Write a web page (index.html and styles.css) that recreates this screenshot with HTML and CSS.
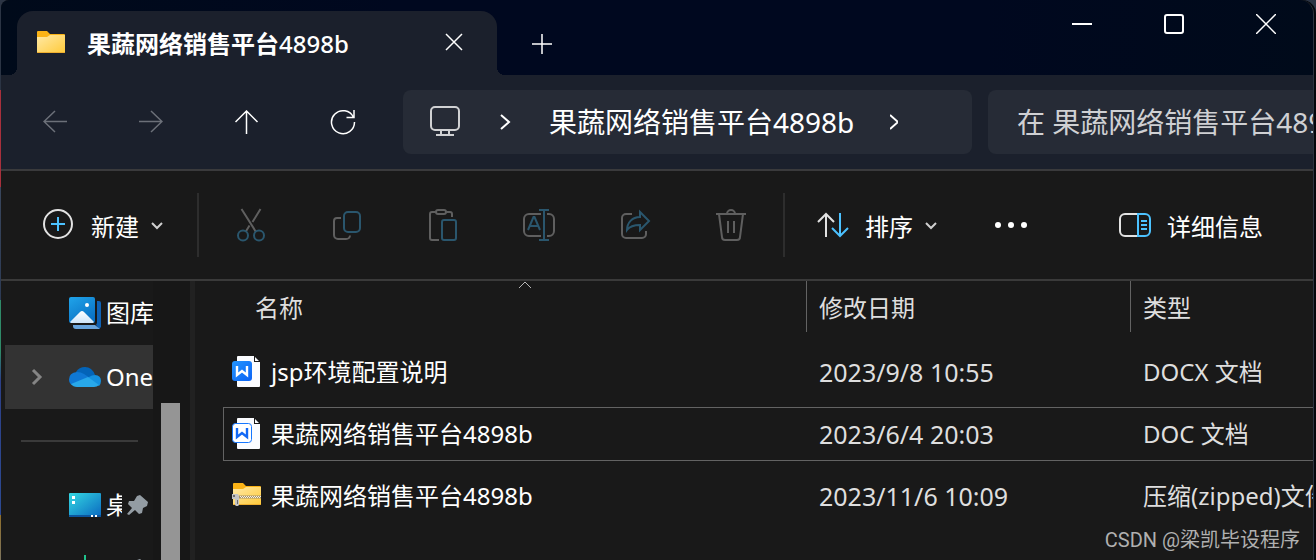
FILE: index.html
```html
<!DOCTYPE html>
<html lang="zh-CN">
<head>
    <meta charset="UTF-8">
    <meta name="viewport" content="width=device-width, initial-scale=1.0">
    <title>果蔬网络销售平台4898b</title>
    <link rel="stylesheet" href="styles.css">
</head>
<body>
    <div class="window">
        <header class="titlebar">
            <div class="tab">
                <svg class="folder" width="28" height="24" viewBox="0 0 28 24">
                    <defs>
                        <linearGradient id="folderFill" x1="0" y1="0" x2="1" y2="1">
                            <stop offset="0" stop-color="#ffe9a6"/>
                            <stop offset="1" stop-color="#ffca3a"/>
                        </linearGradient>
                    </defs>
                    <path d="M0 1a1 1 0 0 1 1-1h9l3 3h14a1 1 0 0 1 1 1v3H0z" fill="#fbb316"/>
                    <path d="M0 6h10l3-2h15v17a1 1 0 0 1-1 1H1a1 1 0 0 1-1-1z" fill="url(#folderFill)"/>
                    <path d="M0 21h28a1 1 0 0 1-1 1H1a1 1 0 0 1-1-1z" fill="#f0b030"/>
                </svg>
                <span class="tab-title">果蔬网络销售平台<span class="latin">4898b</span></span>
                <button class="tab-close" aria-label="关闭标签页">
                    <svg width="20" height="20" viewBox="0 0 20 20"><path d="M2 1l16 16M18 1L2 17"/></svg>
                </button>
            </div>
            <button class="new-tab" aria-label="新建标签页">
                <svg width="20" height="20" viewBox="0 0 20 20"><path d="M10 0v20M0 10h20"/></svg>
            </button>
            <div class="window-buttons">
                <button aria-label="最小化">
                    <svg width="20" height="20" viewBox="0 0 20 20"><path d="M0 10h20" stroke-width="2"/></svg>
                </button>
                <button aria-label="最大化">
                    <svg width="20" height="20" viewBox="0 0 20 20"><rect x="1" y="1" width="18" height="18" rx="2" stroke-width="2"/></svg>
                </button>
                <button aria-label="关闭">
                    <svg width="20" height="20" viewBox="0 0 20 20"><path d="M0 0l20 20M20 0L0 20"/></svg>
                </button>
            </div>
        </header>

        <nav class="navbar">
            <button class="nav-button" aria-label="后退" disabled>
                <svg width="24" height="24" viewBox="0 0 24 24"><path d="M24 11.500H1M12 1L1 11.500 12 22"/></svg>
            </button>
            <button class="nav-button" aria-label="前进" disabled>
                <svg width="24" height="24" viewBox="0 0 24 24"><path d="M0 11.500h23M12 1l11 10.500L12 22"/></svg>
            </button>
            <button class="nav-button" aria-label="向上">
                <svg width="24" height="24" viewBox="0 0 24 24"><path d="M11.500 24V1M.5 12l11-11 11 11"/></svg>
            </button>
            <button class="nav-button" aria-label="刷新">
                <svg width="26" height="26" viewBox="0 0 26 26"><path d="M23.500 8.500A11.500 11.500 0 1 0 24.500 13M24 1v7.500h-7.500"/></svg>
            </button>
            <div class="address">
                <svg width="32" height="32" viewBox="0 0 32 32" class="monitor">
                    <rect x="2" y="1" width="28" height="23" rx="4"/>
                    <path d="M12 24v5M20 24v5M7 29h18"/>
                </svg>
                <svg width="16" height="18" viewBox="0 0 16 18" class="chevron"><path d="M4 2l8 7-8 7"/></svg>
                <a href="#" class="crumb">果蔬网络销售平台4898b</a>
                <svg width="8" height="18" viewBox="4 0 8 18" class="chevron"><path d="M4 2l8 7-8 7"/></svg>
            </div>
            <input class="search" type="text" aria-label="搜索" placeholder="在 果蔬网络销售平台4898b 中搜索">
        </nav>

        <div class="toolbar">
            <button class="command">
                <svg width="32" height="32" viewBox="0 0 32 32">
                    <circle cx="15" cy="15" r="14"/>
                    <path d="M15 8v14M8 15h14" class="accent"/>
                </svg>
                <span>新建</span>
                <svg width="16" height="16" viewBox="0 0 16 16" class="caret"><path d="M3 6l5 5 5-5"/></svg>
            </button>
            <span class="divider"></span>
            <div class="actions">
                <button aria-label="剪切" disabled>
                    <svg width="32" height="34" viewBox="0 0 32 34">
                        <path d="M6.500 1l14.500 23M25.500 1l-8 13M14.500 17.500L10.500 24"/>
                        <circle cx="8" cy="27.500" r="5" class="accent"/>
                        <circle cx="24" cy="27.500" r="5" class="accent"/>
                    </svg>
                </button>
                <button aria-label="复制" disabled>
                    <svg width="32" height="34" viewBox="0 0 32 34">
                        <path d="M10 10H6a3 3 0 0 0-3 3v14a4 4 0 0 0 4 4h8a4 4 0 0 0 4-3.500"/>
                        <rect x="13" y="4" width="16" height="20" rx="4" class="accent"/>
                    </svg>
                </button>
                <button aria-label="粘贴" disabled>
                    <svg width="32" height="34" viewBox="0 0 32 34">
                        <path d="M9 4H5a2 2 0 0 0-2 2v24a2 2 0 0 0 2 2h7M19 4h4a2 2 0 0 1 2 2v3"/>
                        <rect x="9" y="2" width="10" height="4" rx="2"/>
                        <rect x="15" y="12" width="14" height="20" rx="2" class="accent"/>
                    </svg>
                </button>
                <button aria-label="重命名" disabled>
                    <svg width="32" height="34" viewBox="0 0 32 34">
                        <path d="M18 6H6a5 5 0 0 0-5 5v12a5 5 0 0 0 5 5h12M24 6h2a5 5 0 0 1 5 5v12a5 5 0 0 1-5 5h-2"/>
                        <path d="M5 22L10.500 9h1L17 22M7 18h8M16 2h10M16 32h10M21 2v30" class="accent"/>
                    </svg>
                </button>
                <button aria-label="共享" disabled>
                    <svg width="32" height="34" viewBox="0 0 32 34">
                        <path d="M13 6H7a4 4 0 0 0-4 4v16a4 4 0 0 0 4 4h16a4 4 0 0 0 4-4v-3"/>
                        <path d="M21 4v5c-8 0-13 6-13 13 3-4 7-5 13-5v5l9-9z" class="accent"/>
                    </svg>
                </button>
                <button aria-label="删除" disabled>
                    <svg width="32" height="34" viewBox="0 0 32 34">
                        <path d="M1 6h30M4 6l3 23a3 3 0 0 0 3 3h12a3 3 0 0 0 3-3L28 6M12 6a4 4 0 0 1 8 0M13 13v12M19 13v12"/>
                    </svg>
                </button>
            </div>
            <span class="divider"></span>
            <button class="command sort">
                <svg width="32" height="32" viewBox="0 0 32 32">
                    <path d="M9 28V5M1 13l8-8 8 8"/>
                    <path d="M23 4v23M15 19l8 8 8-8" class="accent"/>
                </svg>
                <span>排序</span>
                <svg width="16" height="16" viewBox="0 0 16 16" class="caret"><path d="M3 6l5 5 5-5"/></svg>
            </button>
            <button class="more" aria-label="查看更多">
                <svg width="32" height="8" viewBox="0 0 32 8">
                    <circle cx="3" cy="4" r="3"/><circle cx="16" cy="4" r="3"/><circle cx="29" cy="4" r="3"/>
                </svg>
            </button>
            <button class="command details">
                <svg width="32" height="32" viewBox="0 0 32 32">
                    <path d="M18 5H6a5 5 0 0 0-5 5v12a5 5 0 0 0 5 5h12"/>
                    <path d="M19 5h7a5 5 0 0 1 5 5v12a5 5 0 0 1-5 5h-7zM22 12h6M22 16h6M22 20h6" class="accent"/>
                </svg>
                <span>详细信息</span>
            </button>
        </div>

        <main class="content">
            <aside class="sidebar">
                <div class="tree">
                    <a href="#" class="tree-item">
                        <svg width="32" height="32" viewBox="0 0 32 32">
                            <defs>
                                <linearGradient id="galleryFill" x1="0" y1="0" x2="0.6" y2="1">
                                    <stop offset="0" stop-color="#20a4ea"/>
                                    <stop offset="1" stop-color="#0a72c4"/>
                                </linearGradient>
                                <linearGradient id="hillFill" x1="0" y1="0" x2="0" y2="1">
                                    <stop offset="0" stop-color="#ffffff"/>
                                    <stop offset="1" stop-color="#cfe6fa"/>
                                </linearGradient>
                            </defs>
                            <path d="M28 4h2a2 2 0 0 1 2 2v24l-2 2-3-4 1-2z" fill="#0f62b4"/>
                            <path d="M4 28h22l5 4H7a3 3 0 0 1-3-3z" fill="#69a5de"/>
                            <rect width="26" height="26" rx="2" fill="url(#galleryFill)"/>
                            <path d="M1 25l10-10q2-2 4 0l10 10-1 1H2z" fill="url(#hillFill)"/>
                            <circle cx="18" cy="8" r="2" fill="#fff"/>
                        </svg>
                        <span>图库</span>
                    </a>
                    <a href="#" class="tree-item active">
                        <svg width="12" height="20" viewBox="0 0 12 20" class="expander"><path d="M2 3l7 7-7 7"/></svg>
                        <svg width="32" height="22" viewBox="0 0 32 22">
                            <path d="M7 6Q10 1 16 1q7 0 10 8l-6 5L8 9z" fill="#0364b8"/>
                            <path d="M8 6q4 0 7 2l6 4L3 19Q0 17 0 13.500 0 6.500 8 6z" fill="#0f78d4"/>
                            <path d="M20 11q3-2 6-2 6 .5 6 6 0 3-2 5L19 12z" fill="#1490df"/>
                            <path d="M2 18l17-7 11 8q-2 2-5 2H8q-4 0-6-3z" fill="#28a8ea"/>
                        </svg>
                        <span>OneDrive</span>
                    </a>
                    <hr class="tree-divider">
                    <a href="#" class="tree-item pinned">
                        <svg width="32" height="24" viewBox="0 0 32 24">
                            <defs>
                                <linearGradient id="desktopFill" x1="0" y1="0" x2="1" y2="1">
                                    <stop offset="0" stop-color="#34d8e2"/>
                                    <stop offset="1" stop-color="#0a68c0"/>
                                </linearGradient>
                            </defs>
                            <rect width="32" height="24" rx="1" fill="url(#desktopFill)"/>
                            <path d="M0 22h32v1a1 1 0 0 1-1 1H1a1 1 0 0 1-1-1z" fill="#0c559e"/>
                            <path d="M3 3h3v3H3zM3 8h3v3H3zM22 22h2v2h-2zM26 22h2v2h-2z" fill="#fff"/>
                        </svg>
                        <span>桌面</span>
                        <svg width="22" height="22" viewBox="0 0 22 22" class="pin"><path d="M13 1l8 7-1 4-4 2-1 5-3 1-4-4-6 5-2-1 5-6-4-4 1-3 5 0 3-5z"/></svg>
                    </a>
                    <a href="#" class="tree-item pinned" aria-label="下载">
                        <svg width="32" height="28" viewBox="0 0 32 28"><path d="M16 0v20M8 12l8 8 8-8M5 26h22" fill="none" stroke="#1fc18b" stroke-width="2"/></svg>
                        <span></span>
                        <svg width="22" height="22" viewBox="0 0 22 22" class="pin"><path d="M13 1l8 7-1 4-4 2-1 5-3 1-4-4-6 5-2-1 5-6-4-4 1-3 5 0 3-5z"/></svg>
                    </a>
                </div>
                <div class="scrollbar"><div class="thumb"></div></div>
            </aside>

            <section class="files">
                <table>
                    <colgroup>
                        <col class="col-name">
                        <col class="col-date">
                        <col class="col-type">
                    </colgroup>
                    <thead>
                        <tr>
                            <th><div class="head head-name">名称
                                <svg width="14" height="8" viewBox="0 0 14 8" class="sort-mark"><path d="M1 7l6-6 6 6"/></svg>
                            </div></th>
                            <th><div class="head">修改日期</div></th>
                            <th><div class="head">类型</div></th>
                        </tr>
                    </thead>
                    <tbody>
                        <tr>
                            <td><div class="cell file-name">
                                <svg width="30" height="32" viewBox="0 0 30 32">
                                    <defs>
                                        <linearGradient id="docxFill" x1="0" y1="0" x2="1" y2="1">
                                            <stop offset="0" stop-color="#2496ff"/>
                                            <stop offset="1" stop-color="#0b62f5"/>
                                        </linearGradient>
                                    </defs>
                                    <path d="M6 0h16v6h6v24a1 1 0 0 1-1 1H6a1 1 0 0 1-1-1V1a1 1 0 0 1 1-1z" fill="#fbfcff"/>
                                    <path d="M23 1l4 4h-4z" fill="#fbfcff"/>
                                    <rect x="0" y="5" width="20" height="20" rx="3" fill="url(#docxFill)"/>
                                    <path d="M5 10v9l5-4 5 4v-9" fill="none" stroke="#fff" stroke-width="2.400"/>
                                </svg>
                                <span>jsp环境配置说明</span>
                            </div></td>
                            <td><div class="cell date">2023/9/8 10:55</div></td>
                            <td><div class="cell">DOCX 文档</div></td>
                        </tr>
                        <tr class="focused">
                            <td><div class="cell file-name">
                                <svg width="30" height="32" viewBox="0 0 30 32">
                                    <path d="M6 0h16v6h6v24a1 1 0 0 1-1 1H6a1 1 0 0 1-1-1V1a1 1 0 0 1 1-1z" fill="#fbfcff"/>
                                    <path d="M23 1l4 4h-4z" fill="#fbfcff"/>
                                    <rect x=".5" y="5.500" width="19" height="19" rx="3" fill="#fff" stroke="#1677ff"/>
                                    <path d="M5 10v9l5-4 5 4v-9" fill="none" stroke="#1268f5" stroke-width="2.400"/>
                                </svg>
                                <span>果蔬网络销售平台4898b</span>
                            </div></td>
                            <td><div class="cell date">2023/6/4 20:03</div></td>
                            <td><div class="cell">DOC 文档</div></td>
                        </tr>
                        <tr>
                            <td><div class="cell file-name">
                                <svg width="30" height="26" viewBox="0 0 30 26">
                                    <path d="M1 1a1 1 0 0 1 1-1h9l3 3h14a1 1 0 0 1 1 1v3H1z" fill="#fbb316"/>
                                    <path d="M1 6h10l3-2h15v17a1 1 0 0 1-1 1H2a1 1 0 0 1-1-1z" fill="url(#folderFill)"/>
                                    <path d="M1 21h28a1 1 0 0 1-1 1H2a1 1 0 0 1-1-1z" fill="#f0b030"/>
                                    <path d="M7 14h22" stroke="#a89468" stroke-width="3"/>
                                    <path d="M8 13.500h21M9 14.500h20" stroke="#f4f0e4" stroke-dasharray="1 1"/>
                                    <path d="M0 11h6l1 2v9l-1 1H4l-1-1v-6H0z" fill="#c4c4c4"/>
                                    <path d="M1 12h2v2H1zM5 17h1v4H5z" fill="#6c6c6c"/>
                                </svg>
                                <span>果蔬网络销售平台4898b</span>
                            </div></td>
                            <td><div class="cell date">2023/11/6 10:09</div></td>
                            <td><div class="cell">压缩(zipped)文件夹</div></td>
                        </tr>
                    </tbody>
                </table>
            </section>
        </main>
    </div>
    <div class="watermark">CSDN @梁凯毕设程序</div>
</body>
</html>
```
FILE: styles.css
```css
* {
    box-sizing: border-box;
}
body {
    margin: 0;
    height: 100vh;
    overflow: hidden;
    padding: 0 2px 0 1px;
    /* desktop showing along the left edge of the window */
    background: linear-gradient(#2b3444 90px, #a8303c 90px, #a8303c 187px, #39465c 187px, #2c3a54 300px, #2f8a68 300px, #2f8a68 352px, #2c3f86 380px, #2c4a92 515px, #8f6f2c 515px, #7d745c 100%);
    color: #fff;
    font-family: "Noto Sans", "Noto Sans CJK SC", sans-serif;
    font-size: 24px;
    line-height: 32px;
}
button {
    display: flex;
    align-items: center;
    justify-content: center;
    padding: 0;
    border: none;
    background: none;
    color: inherit;
    font: inherit;
}
a {
    color: inherit;
    text-decoration: none;
}
svg {
    display: block;
    flex: none;
}
.window {
    display: flex;
    flex-direction: column;
    height: 100%;
    overflow: hidden;
    border-right: 1px solid #2c333f;
    border-radius: 8px 14px 0 0;
    background: #191919;
    box-shadow: 2px 0 #04070c;
}

/* title bar */
.titlebar {
    display: flex;
    align-items: flex-end;
    flex: none;
    height: 75px;
    padding-left: 16px;
    background: linear-gradient(90deg, #000a1a, #00081f 30%, #00081f 75%, #000a1a);
}
.titlebar svg {
    fill: none;
    stroke: #fff;
    stroke-width: 1.5;
}
.titlebar .folder {
    stroke: none;
}
.tab {
    position: relative;
    display: flex;
    align-items: center;
    width: 480px;
    height: 64px;
    padding: 0 11px 0 20px;
    border-radius: 16px 16px 0 0;
    background: #1b202c;
}
.tab::before,
.tab::after {
    content: "";
    position: absolute;
    bottom: 0;
    width: 8px;
    height: 8px;
}
.tab::before {
    right: 100%;
    background: radial-gradient(circle at 0 0, transparent 8px, #1b202c 8px);
}
.tab::after {
    left: 100%;
    background: radial-gradient(circle at 100% 0, transparent 8px, #1b202c 8px);
}
.tab-title {
    flex: 1;
    margin-left: 22px;
    padding-top: 2px;
    font-weight: bold;
}
.tab-title .latin {
    font-weight: 500;
}
.tab-close {
    width: 64px;
    height: 48px;
}
.new-tab {
    width: 64px;
    height: 62px;
    margin-left: 13px;
}
.window-buttons {
    display: flex;
    align-self: flex-start;
    margin-left: auto;
    padding-right: 1px;
}
.window-buttons button {
    width: 92px;
    height: 48px;
}

/* navigation */
.navbar {
    display: flex;
    align-items: center;
    flex: none;
    height: 96px;
    padding-left: 22px;
    border-bottom: 2px solid #3a3a3c;
    background: #1b202c;
}
.nav-button {
    width: 64px;
    height: 64px;
    margin-right: 32px;
}
.nav-button svg {
    fill: none;
    stroke: #fff;
    stroke-width: 1.5;
}
.nav-button:disabled svg {
    stroke: #6c7079;
}
.address {
    display: flex;
    align-items: center;
    flex: 1;
    gap: 36px;
    height: 64px;
    margin-left: -4px;
    padding-left: 26px;
    border-radius: 8px;
    background: #262b36;
    font-size: 28px;
    white-space: nowrap;
}
.address svg {
    fill: none;
    stroke: #fff;
    stroke-width: 2;
}
.address .monitor {
    stroke: #d0d1d3;
}
.search {
    width: 325px;
    height: 64px;
    margin-left: 16px;
    padding: 0 0 0 29px;
    border: none;
    border-radius: 8px 0 0 8px;
    background: #262b36;
    color: #fff;
    font: inherit;
    font-size: 28px;
}
.search::placeholder {
    color: #cfd0d3;
    opacity: 1;
}

/* command bar */
.toolbar {
    display: flex;
    align-items: center;
    flex: none;
    height: 110px;
    padding: 0 50px 0 42px;
    border-bottom: 2px solid #3a3a3a;
}
.toolbar svg {
    fill: none;
    stroke: #e2e2e2;
    stroke-width: 2;
}
.toolbar .accent {
    stroke: #4cc2ff;
}
.toolbar .caret {
    margin-left: -6px;
    stroke: #cfcfcf;
}
.command {
    gap: 16px;
    height: 64px;
}
.command span {
    padding-top: 4px;
}
.divider {
    width: 2px;
    height: 64px;
    margin: 0 20px 0 32px;
    background: #2d2d2d;
}
.actions {
    display: flex;
    gap: 32px;
}
.actions button {
    width: 64px;
    height: 64px;
}
.actions svg {
    stroke: #5f5f5f;
}
.actions .accent {
    stroke: #2a566d;
}
.actions + .divider {
    margin: 0 32px 0 20px;
}
.more {
    height: 64px;
    margin-left: 56px;
}
.more svg {
    fill: #fff;
    stroke: none;
}
.details {
    margin-left: auto;
}

/* content */
.content {
    display: flex;
    flex: 1;
    min-height: 0;
}
.sidebar {
    display: flex;
    flex: none;
    width: 194px;
    border-right: 5px solid #212121;
    overflow: hidden;
}
.tree {
    width: 152px;
    padding-left: 4px;
    overflow: hidden;
}
.tree-item {
    display: flex;
    align-items: center;
    gap: 5px;
    height: 64px;
    padding-left: 64px;
    white-space: nowrap;
}
.tree-item.active {
    padding-left: 26px;
    background: #333;
}
.expander {
    margin-right: 21px;
    fill: none;
    stroke: #858585;
    stroke-width: 3;
}
.tree-divider {
    height: 2px;
    margin: 31px 15px 31px 16px;
    border: none;
    background: #3a3a3a;
}
.pinned span {
    width: 16px;
    overflow: hidden;
}
.pin {
    fill: #939ca3;
}
.scrollbar {
    flex: 1;
    padding: 122px 10px 0 8px;
    background: #171717;
}
.thumb {
    height: 100%;
    background: #959595;
}

/* file list */
.files {
    flex: 1;
    min-width: 0;
    padding-left: 28px;
    overflow: hidden;
}
table {
    width: 100%;
    table-layout: fixed;
    border-collapse: collapse;
}
.col-name {
    width: 583px;
}
.col-date {
    width: 324px;
}
th, td {
    padding: 0;
    text-align: left;
    font-weight: normal;
    white-space: nowrap;
}
th {
    height: 60px;
    vertical-align: top;
    color: #dedede;
}
td {
    height: 62px;
    color: #dedede;
}
.head {
    position: relative;
    height: 51px;
    padding: 11px 0 0 12px;
    border-left: 1px solid #636363;
}
.head-name {
    margin-left: 20px;
    border-left: none;
}
.sort-mark {
    position: absolute;
    top: 0;
    left: 50%;
    margin-left: -7px;
    fill: none;
    stroke: #b8b8b8;
}
.cell {
    display: flex;
    align-items: center;
    height: 54px;
    padding-left: 13px;
    border: 1px solid transparent;
    border-width: 1px 0;
}
.date {
    font-size: 25px;
}
.file-name {
    gap: 9px;
    padding-left: 8px;
    border-left-width: 1px;
    color: #fff;
}
.focused .cell {
    border-color: #636363;
}

.watermark {
    position: absolute;
    right: 16px;
    bottom: 4px;
    color: #b0b0b0;
    font-family: Roboto, "Noto Sans CJK SC", sans-serif;
    font-size: 20px;
}
```
